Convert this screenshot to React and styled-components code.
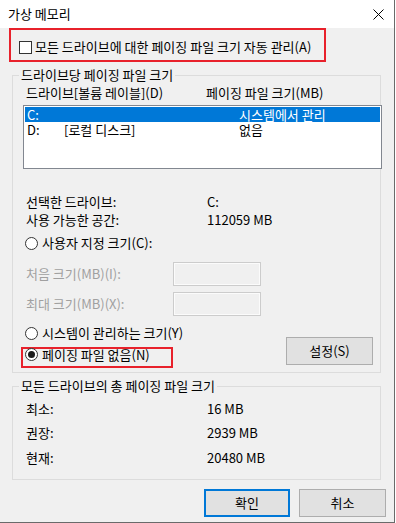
import React from "react";
import styled, { createGlobalStyle } from "styled-components";

const FONT = `"Noto Sans CJK KR", "Noto Sans", sans-serif`;

const Global = createGlobalStyle`
  html, body { margin: 0; padding: 0; background: #ffffff; }
  body { font-family: ${FONT}; font-size: 13px; color: #000; }
  * { box-sizing: border-box; }
`;

const Window = styled.div`
  width: 395px;
  height: 523px;
  background: #f0f0f0;
  border-right: 1px solid #6a6a6a;
  border-bottom: 1px solid #6a6a6a;
  display: flex;
  flex-direction: column;
  font-family: ${FONT};
  font-size: 13px;
  line-height: 14px;
`;

const TitleBar = styled.div`
  height: 28px;
  flex: none;
  background: #ffffff;
  display: flex;
  align-items: center;
  justify-content: space-between;
  padding-left: 8px;
`;

const Title = styled.span`
  line-height: 14px;
`;

const Close = styled.svg`
  width: 11px;
  height: 11px;
  margin-right: 10px;
  margin-top: 1px;
`;

const Highlight = styled.div`
  border: 2px solid #e8212b;
  width: ${(p) => p.$w}px;
  height: ${(p) => p.$h}px;
  margin-left: ${(p) => p.$ml || 0}px;
  margin-top: ${(p) => p.$mt || 0}px;
  padding-left: ${(p) => p.$pl || 0}px;
  padding-top: ${(p) => p.$pt || 0}px;
`;

const CheckRow = styled.label`
  display: flex;
  align-items: center;
  gap: 3px;
  height: 14px;
  white-space: nowrap;
`;

const Checkbox = styled.span`
  width: 13px;
  height: 13px;
  border: 1px solid #333333;
  background: #ffffff;
  flex: none;
`;

const Group = styled.fieldset`
  margin: 6px 0 0 12px;
  width: 369px;
  min-width: 0;
  border: 1px solid #dcdcdc;
  padding: 0 7px ${(p) => p.$pb}px 13px;
`;

const Legend = styled.legend`
  margin-left: -7px;
  padding: 0 2px;
  line-height: 14px;
  height: 14px;
`;

const Columns = styled.div`
  display: grid;
  grid-template-columns: ${(p) => p.$cols};
  height: 14px;
  align-items: center;
  white-space: nowrap;
  margin-top: ${(p) => p.$mt || 0}px;
`;

const ListBox = styled.div`
  margin: 5px 0 0 -3px;
  width: 359px;
  height: 64px;
  border: 1px solid #828790;
  background: #ffffff;
  padding: 1px;
`;

const ListRow = styled.div`
  display: grid;
  grid-template-columns: 37px 175px 1fr;
  align-items: center;
  height: 15px;
  white-space: nowrap;
  padding-left: 2px;
  background: ${(p) => (p.$selected ? "#0078d7" : "transparent")};
  color: ${(p) => (p.$selected ? "#ffffff" : "#000000")};
`;

const RadioRow = styled.label`
  display: flex;
  align-items: center;
  gap: 4px;
  white-space: nowrap;
  height: ${(p) => p.$h || 14}px;
  margin-left: ${(p) => (p.$ml === undefined ? -1 : p.$ml)}px;
  margin-top: ${(p) => p.$mt || 0}px;
`;

const Radio = styled.span`
  width: 13px;
  height: 13px;
  border-radius: 50%;
  border: 1px solid #333333;
  background: #ffffff;
  flex: none;
  display: flex;
  align-items: center;
  justify-content: center;
  &::after {
    content: "";
    width: 7px;
    height: 7px;
    border-radius: 50%;
    background: ${(p) => (p.$checked ? "#1a1a1a" : "transparent")};
  }
`;

const InputRow = styled.div`
  display: grid;
  grid-template-columns: 147px 88px;
  align-items: center;
  white-space: nowrap;
  height: 24px;
  margin-top: ${(p) => p.$mt}px;
  color: #a0a0a0;
`;

const Field = styled.div`
  width: 88px;
  height: 24px;
  border: 1px solid #cccccc;
  box-shadow: inset 0 0 0 1px #fbfbfb;
  background: #f0f0f0;
`;

const Bottom = styled.div`
  display: flex;
  justify-content: space-between;
  align-items: flex-end;
  margin-top: 10px;
`;

const Column = styled.div`
  display: flex;
  flex-direction: column;
`;

const Button = styled.button`
  font-family: ${FONT};
  font-size: 13px;
  line-height: 14px;
  color: #000;
  width: ${(p) => p.$w}px;
  height: 28px;
  background: #e1e1e1;
  border: ${(p) => (p.$default ? "2px solid #0078d7" : "1px solid #adadad")};
  padding: 0;
  margin-bottom: ${(p) => p.$mb || 0}px;
  display: flex;
  align-items: center;
  justify-content: center;
`;

const Actions = styled.div`
  display: flex;
  justify-content: flex-end;
  gap: 9px;
  margin-top: 9px;
  padding-right: 8px;
`;

export default function App() {
  return (
    <>
      <Global />
      <Window>
        <TitleBar>
          <Title>가상 메모리</Title>
          <Close viewBox="0 0 11 11">
            <path d="M0.5 0.5 L10.5 10.5 M10.5 0.5 L0.5 10.5" stroke="#000" strokeWidth="1" fill="none" />
          </Close>
        </TitleBar>

        <Highlight $w={317} $h={34} $ml={9} $pl={8} $pt={10}>
          <CheckRow>
            <Checkbox />
            <span>모든 드라이브에 대한 페이징 파일 크기 자동 관리(A)</span>
          </CheckRow>
        </Highlight>

        <Group $pb={4}>
          <Legend>드라이브당 페이징 파일 크기</Legend>
          <Columns $cols="180px 1fr" $mt={4}>
            <span>드라이브[볼륨 레이블](D)</span>
            <span>페이징 파일 크기(MB)</span>
          </Columns>
          <ListBox>
            <ListRow $selected>
              <span>C:</span>
              <span></span>
              <span>시스템에서 관리</span>
            </ListRow>
            <ListRow>
              <span>D:</span>
              <span>[로컬 디스크]</span>
              <span>없음</span>
            </ListRow>
          </ListBox>

          <Columns $cols="181px 1fr" $mt={26}>
            <span>선택한 드라이브:</span>
            <span>C:</span>
          </Columns>
          <Columns $cols="181px 1fr" $mt={4}>
            <span>사용 가능한 공간:</span>
            <span>112059 MB</span>
          </Columns>

          <RadioRow $mt={9}>
            <Radio />
            <span>사용자 지정 크기(C):</span>
          </RadioRow>
          <InputRow $mt={12}>
            <span>처음 크기(MB)(I):</span>
            <Field />
          </InputRow>
          <InputRow $mt={6}>
            <span>최대 크기(MB)(X):</span>
            <Field />
          </InputRow>

          <Bottom>
            <Column>
              <RadioRow>
                <Radio />
                <span>시스템이 관리하는 크기(Y)</span>
              </RadioRow>
              <Highlight $w={152} $h={21} $ml={-5} $mt={7} $pl={2}>
                <RadioRow $ml={0} $mt={-1} $h={13}>
                  <Radio $checked />
                  <span>페이징 파일 없음(N)</span>
                </RadioRow>
              </Highlight>
            </Column>
            <Button $w={87} $mb={3}>설정(S)</Button>
          </Bottom>
        </Group>

        <Group $pb={14}>
          <Legend>모든 드라이브의 총 페이징 파일 크기</Legend>
          <Columns $cols="181px 1fr" $mt={9}>
            <span>최소:</span>
            <span>16 MB</span>
          </Columns>
          <Columns $cols="181px 1fr" $mt={10}>
            <span>권장:</span>
            <span>2939 MB</span>
          </Columns>
          <Columns $cols="181px 1fr" $mt={11}>
            <span>현재:</span>
            <span>20480 MB</span>
          </Columns>
        </Group>

        <Actions>
          <Button $w={86} $default>확인</Button>
          <Button $w={87}>취소</Button>
        </Actions>
      </Window>
    </>
  );
}
